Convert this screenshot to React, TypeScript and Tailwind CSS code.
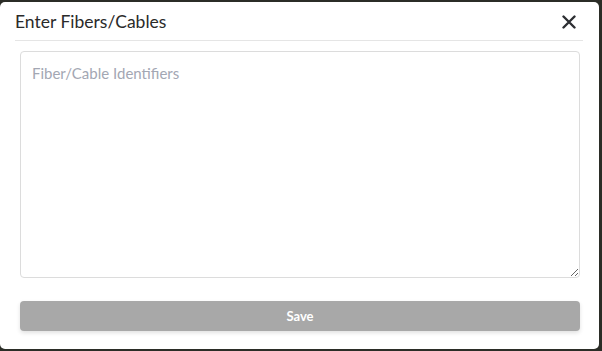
import React from "react";

export default function App() {
  return (
    <div className="w-[602px] h-[351px] bg-[#2b2d27] pt-[2px] pr-[3px] pb-[2px] overflow-hidden" style={{ fontFamily: "Lato, 'Noto Sans', sans-serif" }}>
      <div className="h-full w-full bg-white rounded-[5px] flex flex-col">
        <div className="flex items-center justify-between pl-[15px] pr-[23px] h-[38px]">
          <span className="text-[17.5px] text-[#2a2a2a] leading-none pt-[2px]">Enter Fibers/Cables</span>
          <svg width="14" height="14" viewBox="0 0 14 14" className="mt-[2px]">
            <path d="M1.5 1.5 L12.5 12.5 M12.5 1.5 L1.5 12.5" stroke="#2d2f33" strokeWidth="2.4" strokeLinecap="round" />
          </svg>
        </div>
        <div className="ml-[15px] mr-[16px] h-px bg-[#e5e5e5]" />
        <div className="pl-[20px] pr-[19px] pt-[10px]">
          <textarea
            placeholder="Fiber/Cable Identifiers"
            className="block w-full h-[227px] border border-[#dcdcdc] rounded-[4px] px-[11px] pt-[10px] pb-[12px] text-[15px] text-[#333] placeholder:text-[#a3a7b3] outline-none resize-y"
            style={{ fontFamily: "Lato, 'Noto Sans', sans-serif" }}
          />
        </div>
        <div className="pl-[20px] pr-[19px] pt-[23px]">
          <button className="w-full h-[30px] bg-[#a8a8a8] rounded-[4px] text-white text-[13px] font-bold pt-[1px] shadow-[0_2px_4px_rgba(0,0,0,0.12)]" style={{ fontFamily: "Lato, 'Noto Sans', sans-serif" }}>
            Save
          </button>
        </div>
      </div>
    </div>
  );
}
